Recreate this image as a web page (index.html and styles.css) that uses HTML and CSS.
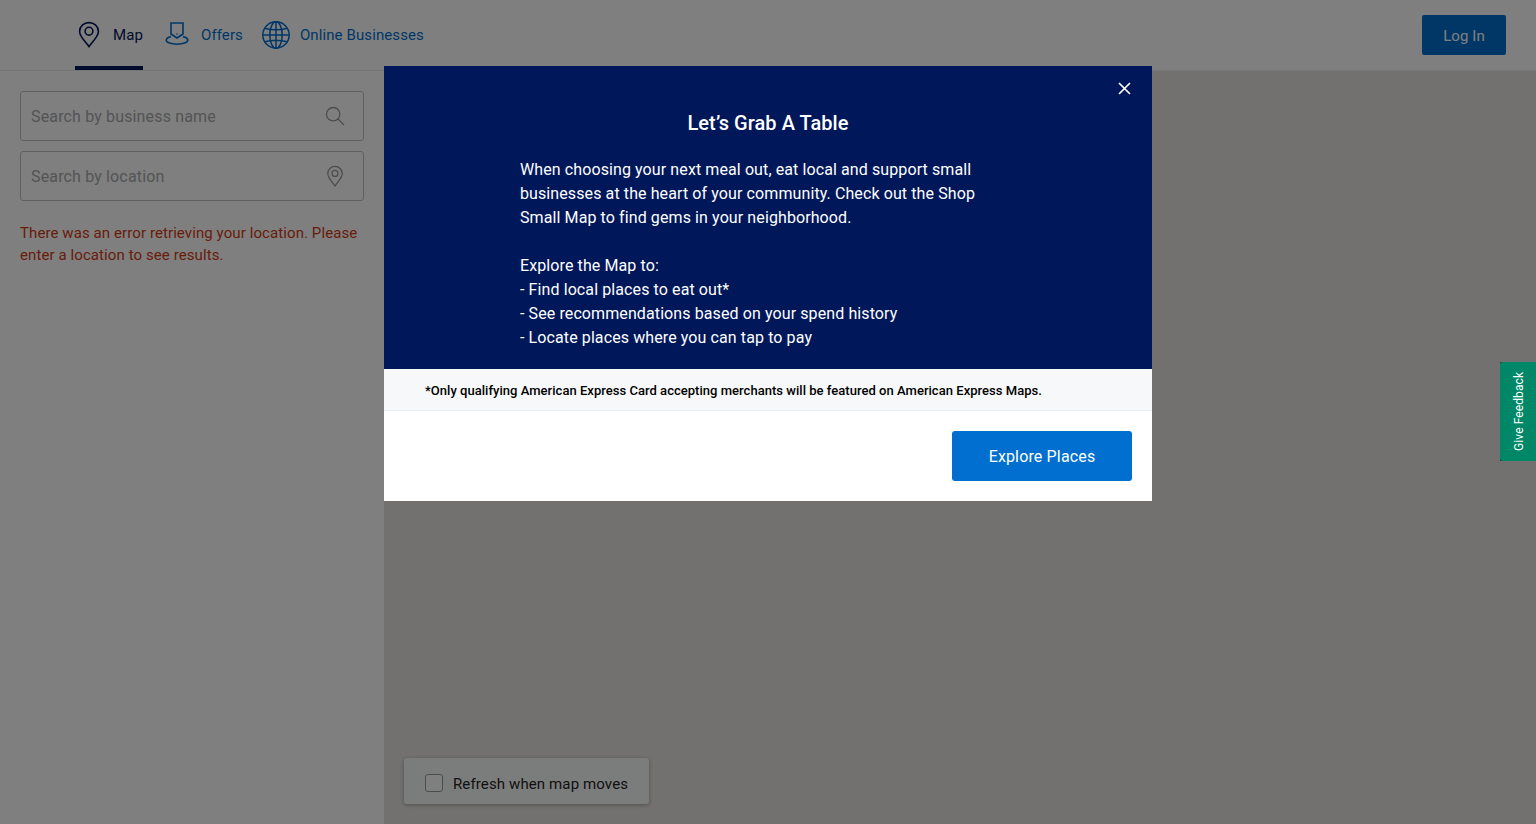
FILE: index.html
```html
<!DOCTYPE html>
<html lang="en">
<head>
    <meta charset="UTF-8">
    <meta name="viewport" content="width=device-width, initial-scale=1.0">
    <title>Shop Small Map</title>
    <link rel="stylesheet" href="styles.css">
</head>
<body>

<header class="topbar">
    <nav class="nav">
        <a href="#" class="nav-item active">
            <svg class="nav-icon" width="28" height="28" viewBox="0 0 28 28" fill="none" stroke="currentColor" stroke-width="1.6">
                <path d="M14 25.5C10.5 20.5 4.6 15.6 4.6 10.4C4.6 5.4 8.8 1.6 14 1.6C19.2 1.6 23.4 5.4 23.4 10.4C23.4 15.6 17.5 20.5 14 25.5Z"/>
                <circle cx="14" cy="10.2" r="3.9"/>
            </svg>
            <span>Map</span>
        </a>
        <a href="#" class="nav-item">
            <svg class="nav-icon" width="24" height="28" viewBox="0 0 24 28" fill="none" stroke="currentColor" stroke-width="1.6">
                <path d="M6 2H18V13L12 17L6 13Z"/>
                <path d="M6 15.6C3 16.2 1.2 17.5 1.2 19.3C1.2 21.6 6 23.2 12 23.2C18 23.2 22.8 21.6 22.8 19.3C22.8 17.5 21 16.2 18 15.6"/>
                <circle cx="12" cy="13" r=".8" fill="currentColor" stroke="none"/>
            </svg>
            <span>Offers</span>
        </a>
        <a href="#" class="nav-item">
            <svg class="nav-icon" width="28" height="28" viewBox="0 0 28 28" fill="none" stroke="currentColor" stroke-width="1.5">
                <circle cx="14" cy="14" r="13.2"/>
                <ellipse cx="14" cy="14" rx="6.2" ry="13.2"/>
                <path d="M14 .8V27.2M.8 14H27.2M3 7.2C9 9.4 19 9.4 25 7.2M3 20.8C9 18.6 19 18.6 25 20.8"/>
            </svg>
            <span>Online Businesses</span>
        </a>
    </nav>
    <button class="login-btn">Log In</button>
</header>

<main class="page">
    <aside class="sidebar">
        <div class="search-field">
            <input type="text" placeholder="Search by business name">
            <svg width="20" height="20" viewBox="0 0 20 20" fill="none" stroke="currentColor" stroke-width="1.3">
                <circle cx="8.2" cy="8.2" r="6.7"/>
                <path d="M13 13L19 19"/>
            </svg>
        </div>
        <div class="search-field">
            <input type="text" placeholder="Search by location">
            <svg width="20" height="22" viewBox="0 0 20 22" fill="none" stroke="currentColor" stroke-width="1.3">
                <path d="M10 21C7.5 17 2.8 13.2 2.8 8.6C2.8 4.6 6 1.4 10 1.4C14 1.4 17.2 4.6 17.2 8.6C17.2 13.2 12.5 17 10 21Z"/>
                <circle cx="10" cy="8.4" r="3"/>
            </svg>
        </div>
        <p class="error-text">There was an error retrieving your location. Please enter a location to see results.</p>
    </aside>
    <section class="map">
        <label class="refresh-card">
            <span class="checkbox"></span>
            <span class="refresh-label">Refresh when map moves</span>
        </label>
    </section>
</main>

<!-- Dim layer and welcome modal -->
<div class="overlay">
    <div class="modal">
        <div class="modal-top">
            <button class="close-modal" aria-label="Close">
                <svg width="13" height="13" viewBox="0 0 13 13" stroke="currentColor" stroke-width="1.7">
                    <path d="M1 1L12 12M12 1L1 12"/>
                </svg>
            </button>
            <h2>Let’s Grab A Table</h2>
            <p>When choosing your next meal out, eat local and support small businesses at the heart of your community. Check out the Shop Small Map to find gems in your neighborhood.</p>
            <p>Explore the Map to:<br>- Find local places to eat out*<br>- See recommendations based on your spend history<br>- Locate places where you can tap to pay</p>
        </div>
        <div class="modal-note">*Only qualifying American Express Card accepting merchants will be featured on American Express Maps.</div>
        <div class="modal-footer">
            <button class="explore-btn">Explore Places</button>
        </div>
    </div>
</div>

<a href="#" class="feedback-tab">Give Feedback</a>

</body>
</html>
```

FILE: styles.css
```css
* {
    box-sizing: border-box;
}
html, body {
    height: 100%;
}
body {
    font-family: Roboto, "Liberation Sans", sans-serif;
    background-color: #ffffff;
    color: #000000;
    margin: 0;
    overflow: hidden;
}
.topbar {
    height: 71px;
    padding-left: 75px;
    padding-right: 30px;
    display: flex;
    justify-content: space-between;
    align-items: flex-start;
    border-bottom: 1px solid #ecedee;
}
.nav {
    display: flex;
    gap: 19px;
    height: 70px;
}
.nav-item {
    display: flex;
    align-items: center;
    gap: 10px;
    height: 70px;
    color: #006fcf;
    font-size: 15px;
    letter-spacing: 0.1px;
    text-decoration: none;
}
.nav-item:first-child {
    margin-right: 3px;
    color: #00175a;
    border-bottom: 4px solid #00175a;
    padding-top: 4px;
}
.nav-item:nth-child(2) {
    gap: 12px;
}
.login-btn {
    margin-top: 15px;
    padding-top: 3px;
    width: 84px;
    height: 40px;
    background-color: #006fcf;
    color: #ffffff;
    border: none;
    border-radius: 2px;
    font-family: inherit;
    font-size: 15px;
    letter-spacing: 0.1px;
}
.page {
    display: flex;
    height: 753px;
}
.sidebar {
    width: 384px;
    padding: 20px;
}
.search-field {
    height: 50px;
    margin-bottom: 10px;
    padding: 0 18px 0 10px;
    display: flex;
    align-items: center;
    border: 1px solid #c0c0c0;
    border-radius: 3px;
    color: #97999b;
}
.search-field input {
    flex: 1;
    border: none;
    outline: none;
    background: none;
    font-family: inherit;
    font-size: 16px;
    letter-spacing: 0.15px;
    padding: 0;
}
.search-field input::placeholder {
    color: #a7a8aa;
    opacity: 1;
}
.error-text {
    margin: 21px 0 0;
    color: #d03a12;
    font-size: 15px;
    letter-spacing: 0.09px;
    line-height: 22px;
}
.map {
    flex: 1;
    background-color: #e5e3df;
    display: flex;
    align-items: flex-end;
    padding: 0 0 20px 20px;
}
.refresh-card {
    width: 245px;
    height: 46px;
    padding: 4px 0 0 21px;
    display: flex;
    align-items: center;
    gap: 10px;
    background-color: #f7f8f9;
    border-radius: 3px;
    box-shadow: 0 1px 4px rgba(0, 0, 0, 0.3);
    font-size: 15px;
    letter-spacing: 0.12px;
    color: #1f1f1f;
}
.refresh-label {
    margin-top: 2px;
}
.checkbox {
    width: 18px;
    height: 18px;
    border: 1px solid #97999b;
    border-radius: 3px;
    background-color: #ffffff;
}
.overlay {
    position: fixed;
    top: 0;
    left: 0;
    right: 0;
    bottom: 0;
    padding-top: 66px;
    background-color: rgba(0, 0, 0, 0.5);
    display: flex;
    justify-content: center;
    align-items: flex-start;
}
.modal {
    width: 768px;
    background-color: #ffffff;
}
.modal-top {
    position: relative;
    height: 303px;
    padding: 43px 152px 0 136px;
    background-color: #00175a;
    color: #ffffff;
    font-size: 16px;
    letter-spacing: 0.1px;
    line-height: 24px;
}
.modal-top h2 {
    margin: 0 -16px 21px 0;
    font-size: 20px;
    font-weight: 500;
    letter-spacing: 0.05px;
    line-height: 28px;
    text-align: center;
}
.modal-top p {
    margin: 0 0 24px;
}
.close-modal {
    position: absolute;
    top: 16px;
    right: 21px;
    padding: 0;
    background: none;
    border: none;
    color: #ffffff;
    display: flex;
}
.modal-note {
    height: 42px;
    padding: 2px 0 0 41px;
    display: flex;
    align-items: center;
    background-color: #f7f8f9;
    border-bottom: 1px solid #ecedee;
    font-size: 13px;
    font-weight: 500;
    letter-spacing: 0.03px;
}
.modal-footer {
    height: 90px;
    padding: 20px;
    display: flex;
    justify-content: flex-end;
}
.explore-btn {
    width: 180px;
    height: 50px;
    background-color: #006fcf;
    color: #ffffff;
    border: none;
    border-radius: 3px;
    font-family: inherit;
    font-size: 16px;
    letter-spacing: 0.15px;
}
.feedback-tab {
    position: fixed;
    right: 0;
    top: 362px;
    width: 36px;
    height: 99px;
    padding-right: 2px;
    display: flex;
    align-items: center;
    justify-content: center;
    writing-mode: vertical-rl;
    transform: rotate(180deg);
    background-color: #008767;
    border-radius: 0 3px 3px 0;
    color: #ffffff;
    font-size: 12px;
    letter-spacing: 0.1px;
    text-decoration: none;
}
```
